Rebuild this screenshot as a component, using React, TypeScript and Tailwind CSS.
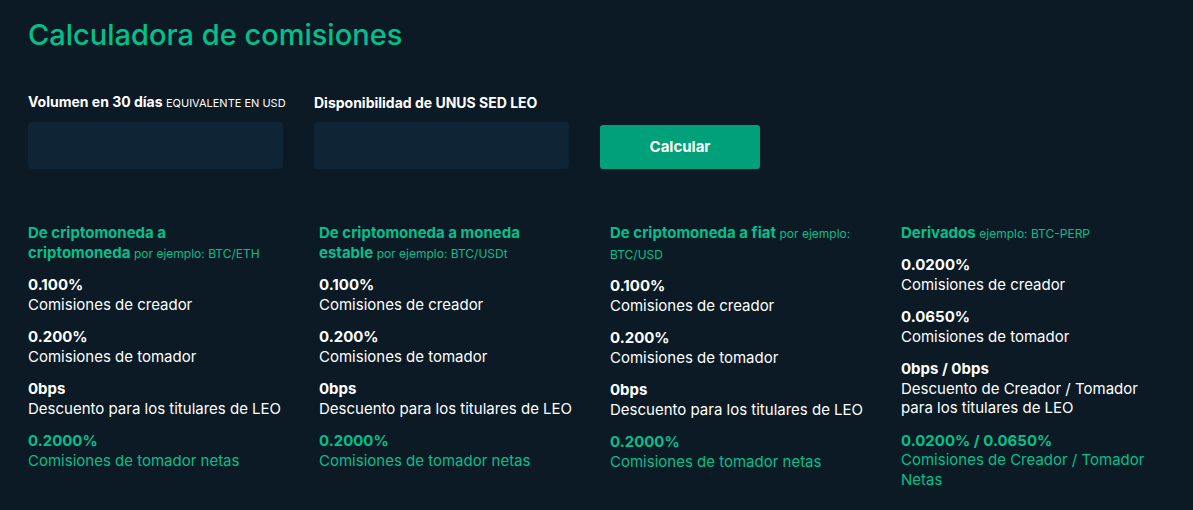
import React from 'react'

type Row = { value: string; label: string[] }
type Col = { title: string; example: string; rows: Row[]; net: Row }

const columns: Col[] = [
  {
    title: 'De criptomoneda a criptomoneda',
    example: 'por ejemplo: BTC/ETH',
    rows: [
      { value: '0.100%', label: ['Comisiones de creador'] },
      { value: '0.200%', label: ['Comisiones de tomador'] },
      { value: '0bps', label: ['Descuento para los titulares de LEO'] },
    ],
    net: { value: '0.2000%', label: ['Comisiones de tomador netas'] },
  },
  {
    title: 'De criptomoneda a moneda estable',
    example: 'por ejemplo: BTC/USDt',
    rows: [
      { value: '0.100%', label: ['Comisiones de creador'] },
      { value: '0.200%', label: ['Comisiones de tomador'] },
      { value: '0bps', label: ['Descuento para los titulares de LEO'] },
    ],
    net: { value: '0.2000%', label: ['Comisiones de tomador netas'] },
  },
  {
    title: 'De criptomoneda a fiat',
    example: 'por ejemplo: BTC/USD',
    rows: [
      { value: '0.100%', label: ['Comisiones de creador'] },
      { value: '0.200%', label: ['Comisiones de tomador'] },
      { value: '0bps', label: ['Descuento para los titulares de LEO'] },
    ],
    net: { value: '0.2000%', label: ['Comisiones de tomador netas'] },
  },
  {
    title: 'Derivados',
    example: 'ejemplo: BTC-PERP',
    rows: [
      { value: '0.0200%', label: ['Comisiones de creador'] },
      { value: '0.0650%', label: ['Comisiones de tomador'] },
      { value: '0bps / 0bps', label: ['Descuento de Creador / Tomador', 'para los titulares de LEO'] },
    ],
    net: { value: '0.0200% / 0.0650%', label: ['Comisiones de Creador / Tomador', 'Netas'] },
  },
]

export default function App() {
  return (
    <div className="min-h-[510px] w-full overflow-hidden bg-[#0b1a24] pl-[28px] pt-[17px] font-['Inter',sans-serif] text-white">
      <h1 className="text-[29px] font-medium leading-[36px] text-[#00c18c]">Calculadora de comisiones</h1>

      <div className="mt-[40px] flex items-end gap-[31px]">
        <div className="flex w-[255px] flex-col">
          <label className="whitespace-nowrap text-[14px] font-bold leading-[18px]">
            Volumen en 30 días <span className="text-[11px] font-normal uppercase">equivalente en USD</span>
          </label>
          <input className="mt-[10px] h-[47px] w-full rounded-[4px] bg-[#0f2535] px-3 text-sm text-white outline-none" />
        </div>
        <div className="flex w-[255px] flex-col">
          <label className="whitespace-nowrap text-[14px] font-bold leading-[18px]">Disponibilidad de UNUS SED LEO</label>
          <input className="mt-[10px] h-[47px] w-full rounded-[4px] bg-[#0f2535] px-3 text-sm text-white outline-none" />
        </div>
        <button className="h-[44px] w-[160px] rounded-[3px] bg-[#00a17a] text-[15px] font-bold text-white">
          Calcular
        </button>
      </div>

      <div className="mt-[54px] grid grid-cols-[repeat(4,254px)] gap-x-[37px]">
        {columns.map(col => (
          <div key={col.title} className="flex flex-col">
            <h3 className="mb-[11px] w-[242px] text-[15px] font-bold leading-[20px] text-[#00c18c]">
              {col.title} <span className="text-[12px] font-normal">{col.example}</span>
            </h3>
            <div className="flex flex-col gap-[13px] text-[15px] leading-[19.5px]">
              {col.rows.map(r => (
                <div key={r.value + r.label[0]}>
                  <div className="font-bold">{r.value}</div>
                  {r.label.map(l => <div key={l} className="whitespace-nowrap">{l}</div>)}
                </div>
              ))}
              <div className="text-[#00c18c]">
                <div className="font-bold">{col.net.value}</div>
                {col.net.label.map(l => <div key={l} className="whitespace-nowrap">{l}</div>)}
              </div>
            </div>
          </div>
        ))}
      </div>
    </div>
  )
}
